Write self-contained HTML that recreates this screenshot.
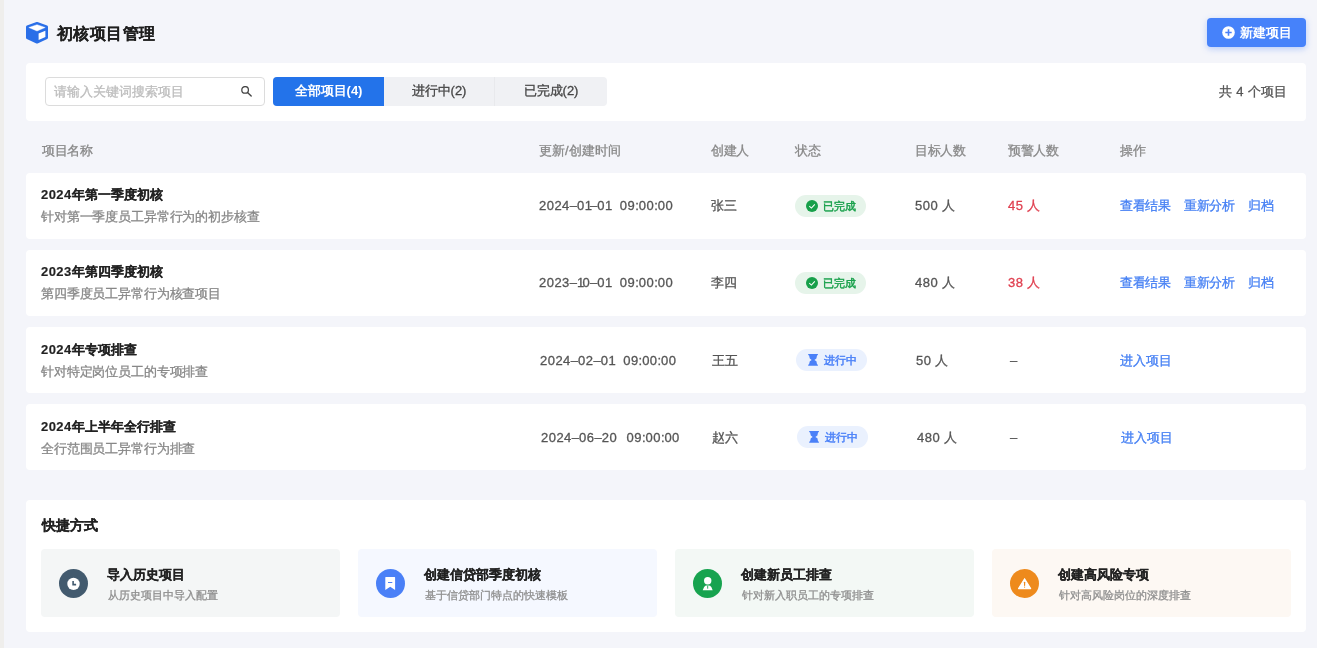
<!DOCTYPE html>
<html><head><meta charset="utf-8">
<style>
*{box-sizing:border-box;margin:0;padding:0}
html,body{width:1317px;height:648px;overflow:hidden}
body{background:#f4f5fa;font-family:"Liberation Sans",sans-serif;color:#333;position:relative}
.strip{position:absolute;left:0;top:0;width:4px;height:648px;background:#efeeec}
.abs{position:absolute}
.title{left:57px;top:22px;transform:scale(0.965);transform-origin:0 50%;-webkit-text-stroke-width:0.1px;font-size:17px;font-weight:bold;color:#1f1f1f;line-height:24px;white-space:nowrap}
.cube{left:26px;top:22px;width:22px;height:22px}
.newbtn{left:1207px;top:18px;width:99px;height:29px;background:#4682fa;border-radius:4px;box-shadow:0 2px 6px rgba(74,128,248,.35);color:#fff;font-size:13px;font-weight:bold;line-height:29px;white-space:nowrap}
.newbtn svg{position:absolute;left:15px;top:8px}
.newbtn span{position:absolute;left:33px;top:0}
.card{background:#fff;border-radius:4px}
.filter{left:26px;top:62.5px;width:1280px;height:58.5px}
.search{left:45px;top:77px;width:220px;height:29px;border:1px solid #dcdcdc;border-radius:4px;background:#fff}
.search span{position:absolute;left:8px;top:0;line-height:27px;font-size:13px;color:#bdbdbd;white-space:nowrap}
.search svg{position:absolute;left:195px;top:8px}
.tabs{left:273px;top:77px;width:334px;height:29px;background:#f0f1f4;border-radius:4px;overflow:hidden}
.tab{position:absolute;top:0;height:29px;line-height:28px;font-size:13px;color:#444;text-align:center;white-space:nowrap}
.tab.on{background:#2373ea;color:#fff;font-weight:bold}
.count{left:1180px;top:84px;width:107px;word-spacing:1px;text-align:right;font-size:13px;color:#555;line-height:16px;white-space:nowrap}
.th{top:142px;letter-spacing:-0.3px;font-size:13px;color:#888;line-height:17px;white-space:nowrap}
.rowbg{left:26px;width:1280px;height:66px}
.row{left:26px;width:1280px;height:65px}
.cell{position:absolute;font-size:13px;color:#555;white-space:nowrap;line-height:17px}
.pname{left:15px;top:13px;font-weight:bold;color:#222;font-size:13px}
.pdesc{left:15px;top:35px;letter-spacing:-0.15px;color:#888;font-size:13px}
.badge{position:absolute;height:22px;width:71px;border-radius:11px;font-size:11px;font-weight:normal;-webkit-text-stroke-width:0.45px;line-height:22px;white-space:nowrap}
.badge.done{background:#e6f4ea;color:#17a04a}
.badge.ing{background:#eaf1fe;color:#4a80f8}
.badge svg{position:absolute;left:11px;top:5px}
.badge span{position:absolute;left:28px;top:0}
.red{color:#e04050}
.t{letter-spacing:0.47px}
.t .o{font-style:normal;letter-spacing:-1.9px}
.t .co{font-style:normal;letter-spacing:-0.1px}
.t .tm{margin-left:1.3px}
.t .da{font-style:normal;letter-spacing:0px}
.pname .n{letter-spacing:0.4px}
.link{color:#4680f4;letter-spacing:-0.3px}
.sc{left:26px;top:499.7px;width:1280px;height:132px}
.sctitle{left:42px;top:515px;font-size:14px;font-weight:bold;color:#222;line-height:20px;white-space:nowrap}
.item{top:549px;width:299px;height:68px;border-radius:4px}
.ico{position:absolute;left:18px;top:19.5px;width:29.4px;height:29.4px;border-radius:50%;overflow:hidden}
.ico svg{transform:translate(-0.3px,-0.3px)}
.ico svg{position:absolute;left:0;top:0}
.it1{position:absolute;left:66px;top:17px;font-size:13px;font-weight:bold;color:#222;line-height:18px;white-space:nowrap}
.it2{position:absolute;left:67px;top:39px;font-size:11px;color:#8f8f8f;line-height:15px;white-space:nowrap}
.sw{-webkit-text-stroke-width:0.3px}
.cell,.th,.it2,.count,.search span,.tab{-webkit-text-stroke-width:0.3px}
.tab.on{-webkit-text-stroke-width:0}
.pname{-webkit-text-stroke-width:0.15px}
.it1,.sctitle{-webkit-text-stroke-width:0.2px}
</style></head><body>
<div id="root" style="position:absolute;left:0;top:0;width:1317px;height:648px;will-change:transform">
<div class="strip"></div>

<svg class="abs cube" viewBox="0 0 22 22"><path d="M11 1.4 L20.6 4.9 V15.8 L11 20.2 L1.4 15.8 V4.9 Z" fill="#2a6fe8" stroke="#2a6fe8" stroke-width="2.8" stroke-linejoin="round"/><path d="M2.8 5.5 L11 2.7 L19.2 5.5 L11 9 Z" fill="#fff" stroke="#fff" stroke-width="0.4" stroke-linejoin="round"/><path d="M12.6 11.5 L19.4 8.7 V14.9 L12.6 17.9 Z" fill="#fff"/></svg>
<div class="abs title">初核项目管理</div>

<div class="abs newbtn"><svg width="13" height="13" viewBox="0 0 13 13"><circle cx="6.5" cy="6.5" r="6.3" fill="#fff"/><path d="M6.5 3.3v6.4M3.3 6.5h6.4" stroke="#4a80f8" stroke-width="1.6"/></svg><span>新建项目</span></div>

<div class="abs card filter"></div>
<div class="abs search"><span>请输入关键词搜索项目</span><svg width="12" height="12" viewBox="0 0 12 12"><circle cx="4.1" cy="3.9" r="3.3" fill="none" stroke="#444" stroke-width="1.25"/><path d="M6.5 6.4 L10.2 10.1" stroke="#444" stroke-width="1.35" stroke-linecap="round"/></svg></div>
<div class="abs tabs">
  <div class="tab on" style="left:0;width:111px">全部项目(4)</div>
  <div class="tab" style="left:111px;width:110px">进行中(2)</div>
  <div class="tab" style="left:221px;width:113px;border-left:1px solid #e8e9ec">已完成(2)</div>
</div>
<div class="abs count">共 4 个项目</div>

<div class="abs th" style="left:42px">项目名称</div>
<div class="abs th" style="left:539px;letter-spacing:0">更新/创建时间</div>
<div class="abs th" style="left:711px">创建人</div>
<div class="abs th" style="left:795px">状态</div>
<div class="abs th" style="left:915px">目标人数</div>
<div class="abs th" style="left:1008px">预警人数</div>
<div class="abs th" style="left:1120px">操作</div>

<!-- row 1 -->
<div class="abs card rowbg" style="top:172.5px"></div>
<div class="abs row" style="top:173px">
  <div class="cell pname"><span class="n">2024</span>年第一季度初核</div>
  <div class="cell pdesc">针对第一季度员工异常行为的初步核查</div>
  <div class="cell t" style="left:513px;top:24px">2024<i class="da">–</i>0<i class="o">1</i><i class="da">–</i>0<i class="o">1</i>&nbsp;&nbsp;<span class="tm">09<i class="co">:</i>00<i class="co">:</i>00</span></div>
  <div class="cell" style="left:685px;top:24px">张三</div>
  <div class="badge done" style="left:769px;top:22px"><svg width="12" height="12" viewBox="0 0 12 12"><circle cx="6" cy="6" r="6" fill="#17a04a"/><path d="M3.3 6.2 L5.4 8.1 L8.8 4.3" fill="none" stroke="#fff" stroke-width="1.05"/></svg><span>已完成</span></div>
  <div class="cell" style="left:889px;top:24px"><span class="t">500</span> 人</div>
  <div class="cell red" style="left:982px;top:24px"><span class="t">45</span> 人</div>
  <div class="cell link" style="left:1094px;top:24px">查看结果</div>
  <div class="cell link" style="left:1158px;top:24px">重新分析</div>
  <div class="cell link" style="left:1222px;top:24px">归档</div>
</div>
<!-- row 2 -->
<div class="abs card rowbg" style="top:249.6px"></div>
<div class="abs row" style="top:250px">
  <div class="cell pname"><span class="n">2023</span>年第四季度初核</div>
  <div class="cell pdesc">第四季度员工异常行为核查项目</div>
  <div class="cell t" style="left:513px;top:24px">2023<i class="da">–</i><i class="o">1</i>0<i class="da">–</i>0<i class="o">1</i>&nbsp;&nbsp;<span class="tm">09<i class="co">:</i>00<i class="co">:</i>00</span></div>
  <div class="cell" style="left:685px;top:24px">李四</div>
  <div class="badge done" style="left:769px;top:22px"><svg width="12" height="12" viewBox="0 0 12 12"><circle cx="6" cy="6" r="6" fill="#17a04a"/><path d="M3.3 6.2 L5.4 8.1 L8.8 4.3" fill="none" stroke="#fff" stroke-width="1.05"/></svg><span>已完成</span></div>
  <div class="cell" style="left:889px;top:24px"><span class="t">480</span> 人</div>
  <div class="cell red" style="left:982px;top:24px"><span class="t">38</span> 人</div>
  <div class="cell link" style="left:1094px;top:24px">查看结果</div>
  <div class="cell link" style="left:1158px;top:24px">重新分析</div>
  <div class="cell link" style="left:1222px;top:24px">归档</div>
</div>
<!-- row 3 -->
<div class="abs card rowbg" style="top:326.7px"></div>
<div class="abs row" style="top:328px">
  <div class="cell pname"><span class="n">2024</span>年专项排查</div>
  <div class="cell pdesc">针对特定岗位员工的专项排查</div>
  <div class="cell t" style="left:514px;top:24px">2024<i class="da">–</i>02<i class="da">–</i>0<i class="o">1</i>&nbsp;&nbsp;<span class="tm">09<i class="co">:</i>00<i class="co">:</i>00</span></div>
  <div class="cell" style="left:686px;top:24px">王五</div>
  <div class="badge ing" style="left:770px;top:21px"><svg width="12" height="12" viewBox="0 0 12 12"><path d="M1.2 0 H10.9 V1.2 H10.1 L9.4 4.5 L7.4 5.9 L9.4 7.2 L10.1 10.6 H10.9 V11.8 H1.2 V10.6 H2 L2.8 7.2 L4.7 5.9 L2.8 4.5 L2 1.2 H1.2 Z" fill="#4a80f8"/></svg><span>进行中</span></div>
  <div class="cell" style="left:890px;top:24px"><span class="t">50</span> 人</div>
  <div class="cell" style="left:984px;top:24px">–</div>
  <div class="cell link" style="left:1094px;top:24px;letter-spacing:0">进入项目</div>
</div>
<!-- row 4 -->
<div class="abs card rowbg" style="top:403.8px"></div>
<div class="abs row" style="top:405px">
  <div class="cell pname"><span class="n">2024</span>年上半年全行排查</div>
  <div class="cell pdesc">全行范围员工异常行为排查</div>
  <div class="cell t" style="left:515px;top:24px">2024<i class="da">–</i>06<i class="da">–</i>20&nbsp;&nbsp;<span class="tm">09<i class="co">:</i>00<i class="co">:</i>00</span></div>
  <div class="cell" style="left:686px;top:24px">赵六</div>
  <div class="badge ing" style="left:771px;top:21px"><svg width="12" height="12" viewBox="0 0 12 12"><path d="M1.2 0 H10.9 V1.2 H10.1 L9.4 4.5 L7.4 5.9 L9.4 7.2 L10.1 10.6 H10.9 V11.8 H1.2 V10.6 H2 L2.8 7.2 L4.7 5.9 L2.8 4.5 L2 1.2 H1.2 Z" fill="#4a80f8"/></svg><span>进行中</span></div>
  <div class="cell" style="left:891px;top:24px"><span class="t">480</span> 人</div>
  <div class="cell" style="left:984px;top:24px">–</div>
  <div class="cell link" style="left:1095px;top:24px;letter-spacing:0">进入项目</div>
</div>

<!-- shortcuts -->
<div class="abs card sc"></div>
<div class="abs sctitle">快捷方式</div>
<div class="abs item" style="left:41px;background:#f4f6f6">
  <div class="ico" style="background:#425a6e"><svg width="30" height="30" viewBox="0 0 30 30"><circle cx="14.8" cy="15.2" r="6.2" fill="#fff"/><path d="M14.4 12.3v3.6h3" fill="none" stroke="#425a6e" stroke-width="1.6"/></svg></div>
  <div class="it1">导入历史项目</div>
  <div class="it2">从历史项目中导入配置</div>
</div>
<div class="abs item" style="left:358px;background:#f5f8ff">
  <div class="ico" style="background:#4a80f7"><svg width="30" height="30" viewBox="0 0 30 30"><path d="M9.6 8.7 Q9.6 8.3 10 8.3 H19 Q19.4 8.3 19.4 8.7 V21.2 L14.5 18 L9.6 21.2 Z" fill="#fff"/><path d="M12.3 13.8h4.3" stroke="#4a80f7" stroke-width="1.1"/></svg></div>
  <div class="it1">创建信贷部季度初核</div>
  <div class="it2">基于信贷部门特点的快速模板</div>
</div>
<div class="abs item" style="left:675px;background:#f3f8f5">
  <div class="ico" style="background:#17a34f"><svg width="30" height="30" viewBox="0 0 30 30"><circle cx="15" cy="12" r="3.7" fill="#fff"/><path d="M10 21.5 L11.4 18.2 Q12.5 16.8 14 16.8 H16 Q17.5 16.8 18.6 18.2 L20 21.5z" fill="#fff"/><path d="M15 17v3" stroke="#17a34f" stroke-width="0.9"/></svg></div>
  <div class="it1">创建新员工排查</div>
  <div class="it2">针对新入职员工的专项排查</div>
</div>
<div class="abs item" style="left:992px;background:#fdf8f3">
  <div class="ico" style="background:#ee8a1c"><svg width="30" height="30" viewBox="0 0 30 30"><path d="M14.9 10 L21 19.9 H8.8z" fill="#fff" stroke="#fff" stroke-width="1.1" stroke-linejoin="round"/><path d="M14.9 13.6v3" stroke="#ee8a1c" stroke-width="1.2" stroke-linecap="round"/><circle cx="14.9" cy="18.4" r="0.65" fill="#ee8a1c"/></svg></div>
  <div class="it1">创建高风险专项</div>
  <div class="it2">针对高风险岗位的深度排查</div>
</div>
</div>
</body></html>
